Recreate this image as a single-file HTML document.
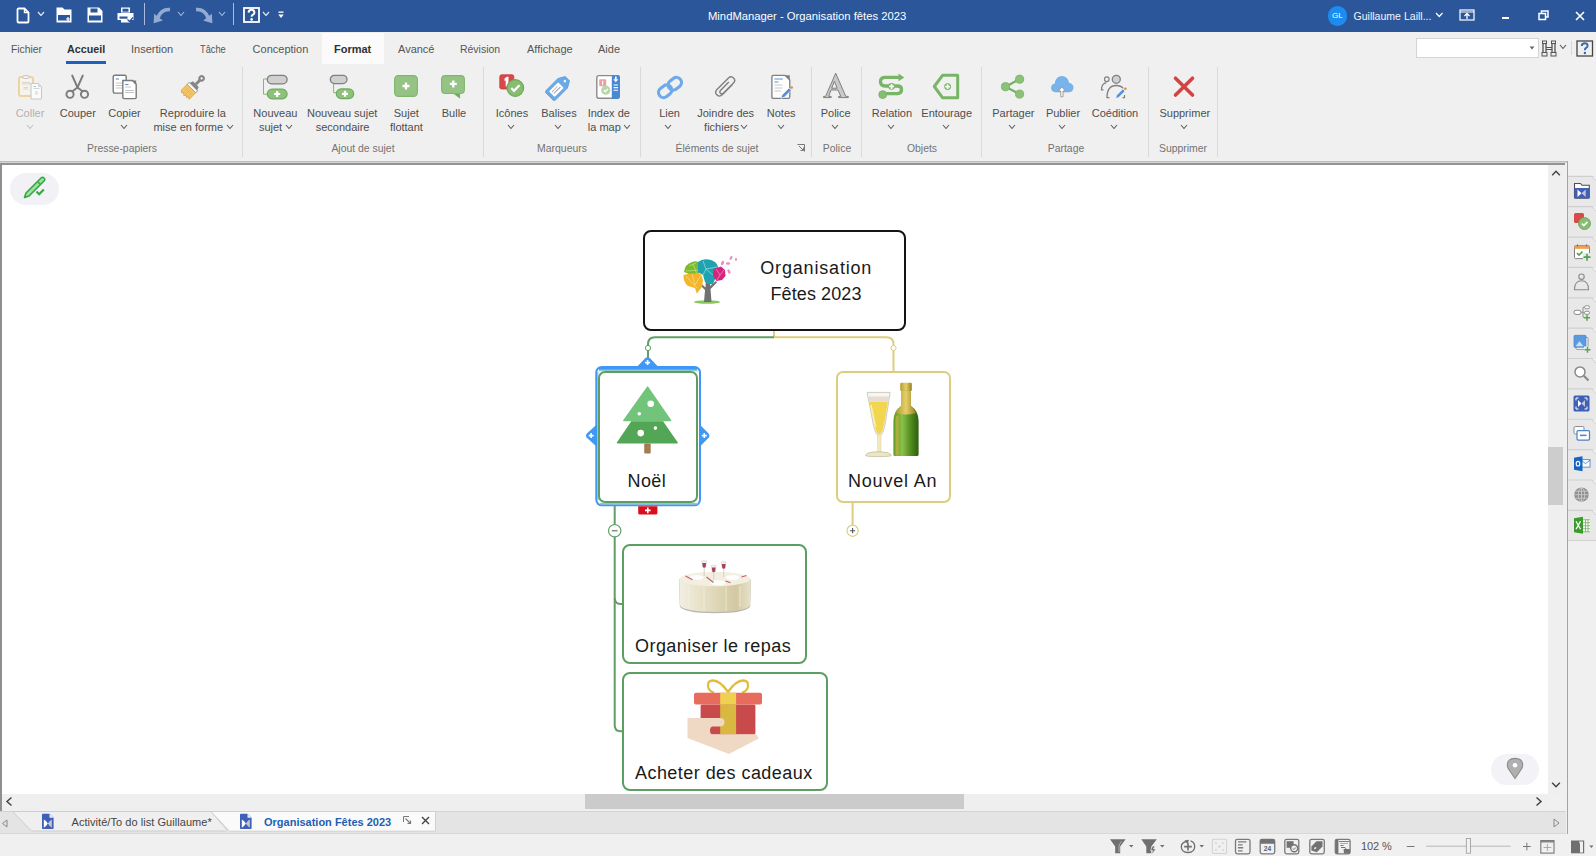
<!DOCTYPE html>
<html><head><meta charset="utf-8">
<style>
*{margin:0;padding:0;box-sizing:border-box}
html,body{width:1596px;height:856px;overflow:hidden;background:#f0f0f0;font-family:"Liberation Sans", sans-serif;position:relative}
.a,.t,.s{position:absolute}
.t{white-space:nowrap}
</style></head><body>

<div class="a" style="left:0px;top:0px;width:1596px;height:32px;background:#2b579a"></div>
<svg class="s" style="left:16px;top:7px;" width="14" height="17" viewBox="0 0 14 17"><path d="M2 1.5 H8.5 L12.5 5.5 V14.5 Q12.5 15.5 11.5 15.5 H2.5 Q1.5 15.5 1.5 14.5 V2.5 Q1.5 1.5 2.5 1.5 Z" fill="none" stroke="#fff" stroke-width="1.8"/><path d="M8.5 1.5 V5.5 H12.5" fill="none" stroke="#fff" stroke-width="1.4"/></svg>
<svg class="s" style="left:37.3px;top:10.85px;" width="8" height="5.5" viewBox="0 0 8 5.5"><polyline points="1,1 4.0,4.5 7,1" fill="none" stroke="#dfe6f2" stroke-width="1.2"/></svg>
<svg class="s" style="left:56px;top:7px;" width="17" height="16" viewBox="0 0 17 16"><path d="M0.5 0.5 H6.5 L8.5 2.5 H15.5 V15.5 H0.5 Z" fill="#fff"/><rect x="2" y="8" width="12" height="5.5" fill="#2b579a"/><path d="M10 12 h4 M12 10 v4" stroke="#fff" stroke-width="1.2"/></svg>
<svg class="s" style="left:87px;top:7px;" width="16" height="16" viewBox="0 0 16 16"><path d="M0.5 0.5 H12 L15.5 4 V15.5 H0.5 Z" fill="#fff"/><rect x="3.5" y="1.5" width="7" height="4" fill="#2b579a"/><rect x="2" y="8.5" width="12" height="5" fill="#2b579a"/></svg>
<svg class="s" style="left:117px;top:7px;" width="17" height="16" viewBox="0 0 17 16"><rect x="4" y="0.5" width="9" height="5" fill="#fff"/><rect x="5.5" y="1.7" width="6" height="3" fill="#2b579a"/><path d="M0.5 6 H16.5 V13 H13 V15.5 H4 V13 H0.5 Z" fill="#fff"/><rect x="2.5" y="9.5" width="8" height="2.2" fill="#2b579a"/><path d="M10.5 12.5 L12.5 14.5 L16 10.5" stroke="#2b579a" stroke-width="1.3" fill="none"/></svg>
<div class="a" style="left:143.5px;top:3px;width:1.2px;height:22px;background:#aabbdd"></div>
<svg class="s" style="left:153px;top:7px;" width="18" height="17" viewBox="0 0 18 17"><path d="M17 2.6 Q8.5 1.8 5 10.5" stroke="#93abd3" stroke-width="3.6" fill="none"/><path d="M0.6 16.2 L1.2 6.8 L9.8 13.4 Z" fill="#93abd3"/></svg>
<svg class="s" style="left:176.5px;top:11.25px;" width="8" height="5.5" viewBox="0 0 8 5.5"><polyline points="1,1 4.0,4.5 7,1" fill="none" stroke="#a9bcdc" stroke-width="1.1"/></svg>
<svg class="s" style="left:195px;top:7px;" width="18" height="17" viewBox="0 0 18 17"><path d="M1 2.6 Q9.5 1.8 13 10.5" stroke="#93abd3" stroke-width="3.6" fill="none"/><path d="M17.4 16.2 L16.8 6.8 L8.2 13.4 Z" fill="#93abd3"/></svg>
<svg class="s" style="left:218.0px;top:11.25px;" width="8" height="5.5" viewBox="0 0 8 5.5"><polyline points="1,1 4.0,4.5 7,1" fill="none" stroke="#a9bcdc" stroke-width="1.1"/></svg>
<div class="a" style="left:232.7px;top:3px;width:1.2px;height:22px;background:#aabbdd"></div>
<svg class="s" style="left:243px;top:7px;" width="17" height="16" viewBox="0 0 17 16"><rect x="1" y="1" width="15" height="14" fill="none" stroke="#fff" stroke-width="1.8"/><path d="M5.6 5.6 Q5.8 2.8 8.5 2.8 Q11.4 2.8 11.4 5.4 Q11.4 7 9.4 8 Q8.6 8.5 8.6 9.8" fill="none" stroke="#fff" stroke-width="2"/><circle cx="8.6" cy="12.4" r="1.3" fill="#fff"/></svg>
<svg class="s" style="left:262.0px;top:10.55px;" width="8" height="5.5" viewBox="0 0 8 5.5"><polyline points="1,1 4.0,4.5 7,1" fill="none" stroke="#dfe6f2" stroke-width="1.2"/></svg>
<svg class="s" style="left:278px;top:11px;" width="6" height="8" viewBox="0 0 6 8"><rect x="0.5" y="0.5" width="5" height="1.3" fill="#fff"/><path d="M0.3 3.5 H5.7 L3 7 Z" fill="#fff"/></svg>
<div class="t" style="left:708px;top:9.8px;font-size:11.25px;line-height:13px;color:#fff">MindManager - Organisation fêtes 2023</div>
<div class="a" style="left:1327.5px;top:6px;width:19.5px;height:19.5px;background:#1c8cf0;border-radius:50%"></div>
<div class="t" style="left:1327.5px;top:10px;width:19.5px;text-align:center;font-size:8px;line-height:12px;color:#fff">GL</div>
<div class="t" style="left:1353.5px;top:10px;font-size:10.55px;line-height:13px;color:#f2f5fa">Guillaume Laill...</div>
<svg class="s" style="left:1434.55px;top:12.25px;" width="8.5" height="5.5" viewBox="0 0 8.5 5.5"><polyline points="1,1 4.25,4.5 7.5,1" fill="none" stroke="#fff" stroke-width="1.2"/></svg>
<svg class="s" style="left:1459px;top:9px;" width="16" height="12" viewBox="0 0 16 12"><rect x="1" y="1" width="14" height="10" fill="none" stroke="#fff" stroke-width="1.2"/><path d="M1 3 H15" stroke="#fff" stroke-width="1"/><path d="M8 10 V5 M5.5 7 L8 4.5 L10.5 7" stroke="#fff" stroke-width="1.3" fill="none"/></svg>
<div class="a" style="left:1502.4px;top:16.5px;width:6.5px;height:2.5px;background:#fff"></div>
<svg class="s" style="left:1538px;top:10px;" width="11" height="11" viewBox="0 0 11 11"><rect x="1" y="3.5" width="6.5" height="6" fill="none" stroke="#fff" stroke-width="1.5"/><path d="M3.5 3.5 V1 H10 V7 H7.5" fill="none" stroke="#fff" stroke-width="1.5"/></svg>
<svg class="s" style="left:1575px;top:11px;" width="10" height="10" viewBox="0 0 10 10"><path d="M1 1 L9 9 M9 1 L1 9" stroke="#fff" stroke-width="1.6"/></svg>
<div class="a" style="left:322px;top:33px;width:62px;height:30.5px;background:#fbfbfb"></div>
<div class="t" style="left:11px;top:43.4px;font-size:11px;line-height:13px;color:#555;font-weight:400;transform:scaleX(0.94);transform-origin:0 0">Fichier</div>
<div class="t" style="left:67px;top:43.4px;font-size:11px;line-height:13px;color:#303030;font-weight:700;transform:scaleX(0.975);transform-origin:0 0">Accueil</div>
<div class="t" style="left:131px;top:43.4px;font-size:11px;line-height:13px;color:#555;font-weight:400;transform:scaleX(1);transform-origin:0 0">Insertion</div>
<div class="t" style="left:200px;top:43.4px;font-size:11px;line-height:13px;color:#555;font-weight:400;transform:scaleX(0.84);transform-origin:0 0">Tâche</div>
<div class="t" style="left:252.6px;top:43.4px;font-size:11px;line-height:13px;color:#555;font-weight:400;transform:scaleX(1);transform-origin:0 0">Conception</div>
<div class="t" style="left:334px;top:43.4px;font-size:11px;line-height:13px;color:#303030;font-weight:700;transform:scaleX(1);transform-origin:0 0">Format</div>
<div class="t" style="left:398px;top:43.4px;font-size:11px;line-height:13px;color:#555;font-weight:400;transform:scaleX(1);transform-origin:0 0">Avancé</div>
<div class="t" style="left:460px;top:43.4px;font-size:11px;line-height:13px;color:#555;font-weight:400;transform:scaleX(0.95);transform-origin:0 0">Révision</div>
<div class="t" style="left:527px;top:43.4px;font-size:11px;line-height:13px;color:#555;font-weight:400;transform:scaleX(1);transform-origin:0 0">Affichage</div>
<div class="t" style="left:598px;top:43.4px;font-size:11px;line-height:13px;color:#555;font-weight:400;transform:scaleX(1);transform-origin:0 0">Aide</div>
<div class="a" style="left:66px;top:60.5px;width:40px;height:3.2px;background:#1f5fc0"></div>
<div class="a" style="left:1416px;top:37.5px;width:122.5px;height:20px;background:#fff;border:1px solid #d4d4d4"></div>
<svg class="s" style="left:1529px;top:45.5px;" width="6" height="4" viewBox="0 0 6 4"><path d="M0.5 0.5 H5.5 L3 3.5 Z" fill="#666"/></svg>
<svg class="s" style="left:1541px;top:40px;" width="18" height="17" viewBox="0 0 18 17"><rect x="1.5" y="1" width="4" height="2.5" fill="none" stroke="#555" stroke-width="1"/><rect x="10.5" y="1" width="4" height="2.5" fill="none" stroke="#555" stroke-width="1"/><path d="M2 4 V13 M5 4 V13 M11 4 V13 M14 4 V13" stroke="#555" stroke-width="1.3"/><rect x="1" y="12.5" width="5" height="3.5" fill="none" stroke="#555" stroke-width="1"/><rect x="10" y="12.5" width="5" height="3.5" fill="none" stroke="#555" stroke-width="1"/><path d="M5 7.5 H11 M5 9.5 H11" stroke="#555" stroke-width="1"/></svg>
<svg class="s" style="left:1559.2px;top:44.05px;" width="8" height="5.5" viewBox="0 0 8 5.5"><polyline points="1,1 4.0,4.5 7,1" fill="none" stroke="#555" stroke-width="1.1"/></svg>
<div class="a" style="left:1571.3px;top:40.5px;width:1px;height:14px;background:#d8d8d8"></div>
<svg class="s" style="left:1576px;top:39.5px;" width="18" height="17" viewBox="0 0 18 17"><rect x="1" y="1" width="15.5" height="15" fill="none" stroke="#444" stroke-width="1.3"/><path d="M5.8 6 Q5.8 3.3 8.8 3.3 Q11.6 3.3 11.6 5.7 Q11.6 7.3 9.8 8.2 Q8.9 8.7 8.9 10.3" fill="none" stroke="#3c68b0" stroke-width="1.9"/><circle cx="8.9" cy="13" r="1.2" fill="#3c68b0"/></svg>
<div class="a" style="left:242.3px;top:67px;width:1px;height:90px;background:#dadada"></div>
<div class="a" style="left:482.5px;top:67px;width:1px;height:90px;background:#dadada"></div>
<div class="a" style="left:639.8px;top:67px;width:1px;height:90px;background:#dadada"></div>
<div class="a" style="left:810.5px;top:67px;width:1px;height:90px;background:#dadada"></div>
<div class="a" style="left:861px;top:67px;width:1px;height:90px;background:#dadada"></div>
<div class="a" style="left:981.4px;top:67px;width:1px;height:90px;background:#dadada"></div>
<div class="a" style="left:1148.4px;top:67px;width:1px;height:90px;background:#dadada"></div>
<div class="a" style="left:1216.5px;top:67px;width:1px;height:90px;background:#dadada"></div>
<!-- Coller -->
<svg class="s" style="left:17px;top:74px" width="26" height="26" viewBox="0 0 26 26">
<rect x="2" y="3" width="14" height="19" rx="2" fill="#f7f3ea" stroke="#ecd3a3" stroke-width="2"/>
<rect x="6" y="1.5" width="6" height="3" rx="1.2" fill="#f0f0f0" stroke="#c8c8c8" stroke-width="1"/>
<path d="M5 8.5 H13 M5 10 H13 M6.5 13.5 H11 M6.5 15 H11" stroke="#d2d2d2" stroke-width="0.9"/>
<path d="M14 9.5 H21 L24.5 13 V24 Q24.5 25 23.5 25 H15 Q14 25 14 24 Z" fill="#fbfbfb" stroke="#c8c8c8" stroke-width="1.1"/>
<path d="M21 9.5 V13 H24.5" fill="#d9d9d9"/>
<path d="M16.5 12.5 H19" stroke="#9ec0ea" stroke-width="1"/>
<path d="M16.5 14.5 H22.5 M18 18 H21 M18 19.8 H21" stroke="#cfcfcf" stroke-width="0.9"/>
</svg>
<!-- Couper -->
<svg class="s" style="left:64px;top:74px" width="27" height="26" viewBox="0 0 27 26">
<path d="M8.2 1.5 L13.5 13.5 M18.8 1.5 L13.5 13.5" stroke="#7c7c7c" stroke-width="1.9" stroke-linecap="round"/>
<path d="M13.5 13.5 L7.8 17.8 M13.5 13.5 L19.2 17.8" stroke="#7c7c7c" stroke-width="1.9"/>
<circle cx="6" cy="20.3" r="3.6" fill="none" stroke="#7c7c7c" stroke-width="1.9"/>
<circle cx="20.5" cy="20.3" r="3.6" fill="none" stroke="#7c7c7c" stroke-width="1.9"/>
</svg>
<!-- Copier -->
<svg class="s" style="left:112px;top:74px" width="26" height="26" viewBox="0 0 26 26">
<rect x="1.2" y="1.3" width="13" height="17.8" rx="1.5" fill="#fff" stroke="#7a7a7a" stroke-width="1.4"/>
<path d="M3.8 5 H7" stroke="#5a8fd8" stroke-width="1.1"/>
<path d="M3.8 9 H10 M3.8 11.5 H10 M3.8 14 H10" stroke="#bdbdbd" stroke-width="0.9"/>
<path d="M10.8 6.5 H20.5 L24.2 10.2 V23.5 Q24.2 24.6 23 24.6 H12 Q10.8 24.6 10.8 23.5 Z" fill="#fff" stroke="#7a7a7a" stroke-width="1.4"/>
<path d="M20 6.5 L24.2 10.7 V6.5 Z" fill="#7a7a7a"/>
<path d="M13.2 10.5 H16.5" stroke="#5a8fd8" stroke-width="1.1"/>
<path d="M13.2 13 H19 M13.2 16.5 H22 M13.2 18.5 H22" stroke="#bdbdbd" stroke-width="0.9"/>
</svg>
<!-- Brush -->
<svg class="s" style="left:179px;top:73px" width="28" height="28" viewBox="0 0 28 28">
<g transform="rotate(45 14 14)">
<circle cx="14" cy="1.8" r="3.2" fill="#858585"/><circle cx="14" cy="1.8" r="1.2" fill="#f0f0f0"/>
<rect x="12.6" y="4" width="2.8" height="6" fill="#858585"/>
<path d="M10 10 H18 L19 12.5 V13.5 H9 V12.5 Z" fill="#858585"/>
<rect x="8" y="13.5" width="12" height="2.8" fill="#fff" stroke="#8a8a8a" stroke-width="0.9"/>
<path d="M8 16.3 H20 V25.5 L18 24 L17 26 L15 24.5 L13.5 26.5 L11.5 24.5 L10 26 L8 24.5 Z" fill="#f2c466" stroke="#d9a84a" stroke-width="0.9"/>
<path d="M11 19 V22 M14 18.5 V23 M17 19 V22" stroke="#d9a84a" stroke-width="0.8"/>
</g>
</svg>
<!-- Nouveau sujet -->
<svg class="s" style="left:262px;top:74px" width="26" height="26" viewBox="0 0 26 26">
<path d="M5 5 H1.5 V20.2 H5" fill="none" stroke="#7fba6d" stroke-width="1"/>
<rect x="5.3" y="1.3" width="19.8" height="8.6" rx="4.3" fill="#d0d0d0" stroke="#7f7f7f" stroke-width="1.3"/>
<rect x="5.3" y="15.2" width="19.8" height="9.6" rx="4.8" fill="#8dc27b" stroke="#6eaa5c" stroke-width="1.2"/>
<path d="M15.2 17 V23 M12.2 20 H18.2" stroke="#fff" stroke-width="2.2"/>
</svg>
<!-- Nouveau sujet secondaire -->
<svg class="s" style="left:329px;top:74px" width="26" height="26" viewBox="0 0 26 26">
<path d="M4.6 9.5 V18.7 H7.5" fill="none" stroke="#7fba6d" stroke-width="1"/>
<rect x="1.3" y="1.3" width="16.7" height="8.3" rx="4.1" fill="#d0d0d0" stroke="#7f7f7f" stroke-width="1.3"/>
<rect x="7.3" y="14.9" width="17.4" height="9.7" rx="4.8" fill="#8dc27b" stroke="#6eaa5c" stroke-width="1.2"/>
<path d="M16 16.8 V22.8 M13 19.8 H19" stroke="#fff" stroke-width="2.2"/>
</svg>
<!-- Sujet flottant -->
<svg class="s" style="left:393px;top:74px" width="26" height="24" viewBox="0 0 26 24">
<rect x="1.6" y="1.6" width="22.8" height="20.8" rx="3.8" fill="#95c383" stroke="#80b56e" stroke-width="1.1"/>
<path d="M13 8.5 V15.5 M9.5 12 H16.5" stroke="#fff" stroke-width="2.3"/>
</svg>
<!-- Bulle -->
<svg class="s" style="left:440px;top:74px" width="26" height="25" viewBox="0 0 26 25">
<path d="M5.3 1.6 H20.7 Q24.4 1.6 24.4 5.3 V15.8 Q24.4 19.5 20.7 19.5 H19.5 L19.6 23.7 L14 19.5 H5.3 Q1.6 19.5 1.6 15.8 V5.3 Q1.6 1.6 5.3 1.6 Z" fill="#95c383" stroke="#80b56e" stroke-width="1.1"/>
<path d="M19 19.5 L19.5 23.5 L14.5 19.6 Z" fill="#6aa85a"/>
<path d="M13.3 6.4 V13.4 M9.8 9.9 H16.8" stroke="#fff" stroke-width="2.3"/>
</svg>
<!-- Icones -->
<svg class="s" style="left:498px;top:73px" width="28" height="27" viewBox="0 0 28 27">
<rect x="1.8" y="1.8" width="14" height="14.2" rx="1.8" fill="#d84a4a" stroke="#c53a3a" stroke-width="0.8"/>
<path d="M6.5 5.5 L9 3.8 H10.5 V13.5 H7.7 V7.5 L6.5 8 Z" fill="#fff"/>
<circle cx="17.3" cy="15" r="8.3" fill="#87bd70" stroke="#6aa858" stroke-width="1.2"/>
<path d="M13.2 15 L16 17.8 L21.5 12.3" fill="none" stroke="#fff" stroke-width="2.3"/>
</svg>
<!-- Balises -->
<svg class="s" style="left:545px;top:74px" width="27" height="27" viewBox="0 0 27 27">
<g transform="rotate(-45 13.5 13.5)">
<path d="M2.5 6.8 H19.5 L26 10.5 V16.5 L19.5 20.2 H2.5 Q0.8 20.2 0.8 18.5 V8.5 Q0.8 6.8 2.5 6.8 Z" fill="#6aaae8" stroke="#5a98dc" stroke-width="0.8"/>
<rect x="4" y="9.5" width="13" height="8" rx="1" fill="#fff"/>
<path d="M6 12 H8 M6 14.5 H15" stroke="#9a9a9a" stroke-width="1"/>
<path d="M8 12 H13.5" stroke="#c0c0c0" stroke-width="1"/>
<circle cx="22.5" cy="13.5" r="1.2" fill="#fff"/>
</g>
</svg>
<!-- Index -->
<svg class="s" style="left:595px;top:74px" width="26" height="26" viewBox="0 0 26 26">
<rect x="1.8" y="1.6" width="22.4" height="22.6" rx="2" fill="#fff" stroke="#8a8a8a" stroke-width="1.4"/>
<path d="M16.8 0.9 H22.5 Q24.9 0.9 24.9 3.3 V22.6 Q24.9 24.9 22.5 24.9 H16.8 Z" fill="#4a88d2"/>
<rect x="4.2" y="5.3" width="7" height="7" rx="1" fill="#eaa0a0"/>
<path d="M7 7 L8.2 6.4 V11 H7.2" fill="#fff"/>
<circle cx="10.8" cy="16.2" r="4.6" fill="#b6d8a8"/>
<path d="M8.8 16.2 L10.3 17.6 L13 14.9" fill="none" stroke="#fff" stroke-width="1.3"/>
<path d="M20.8 2.4 V5.5" stroke="#fff" stroke-width="1.6"/><path d="M18.3 5.2 H23.3 L20.8 8.3 Z" fill="#fff"/>
<path d="M18.6 11 H23 M18.6 13.6 H23 M18.6 16.2 H23" stroke="#fff" stroke-width="1.1"/>
</svg>
<!-- Lien -->
<svg class="s" style="left:654px;top:72px" width="32" height="31" viewBox="0 0 32 31">
<g transform="rotate(-38 16 15.5)" fill="none" stroke="#6eaae9" stroke-width="3.2">
<rect x="2.8" y="10.5" width="14.2" height="10" rx="5"/>
<rect x="15" y="10.5" width="14.2" height="10" rx="5"/>
</g>
</svg>
<!-- Paperclip -->
<svg class="s" style="left:713px;top:74px" width="25" height="26" viewBox="0 0 25 26">
<path d="M19.5 10.5 L9.5 20.5 Q6.5 23.5 3.8 20.8 Q1.2 18.2 4.2 15.2 L15.5 3.9 Q18 1.4 20.6 4 Q23 6.5 20.5 9 L10.5 19 Q8.8 20.7 7.4 19.3 Q6 17.9 7.7 16.2 L15.8 8.1" fill="none" stroke="#7f7f7f" stroke-width="1.4"/>
</svg>
<!-- Notes -->
<svg class="s" style="left:771px;top:74px" width="23" height="26" viewBox="0 0 23 26">
<path d="M2.4 1.3 H14 L18.8 6 V22.8 Q18.8 24.4 17.2 24.4 H2.4 Q0.9 24.4 0.9 22.8 V2.9 Q0.9 1.3 2.4 1.3 Z" fill="#fff" stroke="#7f7f7f" stroke-width="1.3"/>
<path d="M13.8 1.3 L18.8 6.3 V1.3 Z" fill="#7f7f7f"/>
<path d="M3.5 5 H11.8 M3.5 8 H7.5" stroke="#5a8fd8" stroke-width="1"/>
<path d="M3.5 11 H11.5 M3.5 14 H11.5 M3.5 17 H10" stroke="#c0c0c0" stroke-width="0.9"/>
<path d="M10 24.3 L11 21 L18 14 L20.3 16.3 L13.3 23.3 Z" fill="#5a8fd8" stroke="#fff" stroke-width="0.6"/>
<circle cx="20.7" cy="13.5" r="1.3" fill="#d89040"/>
</svg>
<!-- Police A -->
<svg class="s" style="left:822px;top:72px" width="28" height="27" viewBox="0 0 28 27">
<path d="M13.7 1.2 L23.8 24.4 H26.3 V25.6 H16.6 V24.4 H18.8 L16 18 H9 L6.6 24.4 H9.2 V25.6 H1.5 V24.4 H3.6 Z M9.7 16.2 H15.2 L12.3 9.3 Z" fill="#c9c9c9" stroke="#808080" stroke-width="1" fill-rule="evenodd"/>
</svg>
<!-- Relation -->
<svg class="s" style="left:876px;top:73px" width="30" height="27" viewBox="0 0 30 27">
<path d="M24 4.4 H9 Q4.5 4.4 4.5 8.6 Q4.5 13 9 13 H21.5 Q25.5 13 25.5 16.8 Q25.5 20.6 21.5 20.6 H7" fill="none" stroke="#78b566" stroke-width="3.3"/>
<path d="M22.5 0.6 L28.3 4.4 L22.5 8.2 Z" fill="#78b566"/>
<circle cx="6.7" cy="21.6" r="3.9" fill="#86bd72" stroke="#78b566" stroke-width="1"/>
<circle cx="15.6" cy="13.4" r="3.3" fill="#78b566"/>
<path d="M15.6 10.9 V15.9 M13.1 13.4 H18.1" stroke="#fff" stroke-width="1.6"/>
</svg>
<!-- Entourage -->
<svg class="s" style="left:932px;top:73px" width="28" height="27" viewBox="0 0 28 27">
<path d="M10.5 2.3 H25.7 V24.7 H10.5 L2.3 13.5 Z" fill="none" stroke="#78b566" stroke-width="3" stroke-linejoin="round"/>
<circle cx="15.6" cy="13.6" r="3.4" fill="#78b566"/>
<path d="M15.6 11.2 V16 M13.2 13.6 H18" stroke="#fff" stroke-width="1.6"/>
</svg>
<!-- Partager -->
<svg class="s" style="left:1000px;top:74px" width="25" height="26" viewBox="0 0 25 26">
<path d="M19.6 5.2 L5.5 12.7 L19.6 20.1" fill="none" stroke="#72b160" stroke-width="2.2"/>
<circle cx="19.6" cy="5.2" r="4.1" fill="#8cc178" stroke="#74b262" stroke-width="0.8"/>
<circle cx="5.5" cy="12.7" r="4.1" fill="#8cc178" stroke="#74b262" stroke-width="0.8"/>
<circle cx="19.6" cy="20.1" r="4.1" fill="#8cc178" stroke="#74b262" stroke-width="0.8"/>
</svg>
<!-- Publier -->
<svg class="s" style="left:1050px;top:75px" width="25" height="23" viewBox="0 0 25 23">
<path d="M5.5 16.8 Q1.5 16.8 1.5 12.8 Q1.5 9.2 5.3 8.8 Q5.8 1.6 12 1.6 Q17.8 1.6 18.6 8.3 Q23 8.6 23 12.6 Q23 16.8 18.8 16.8 Z" fill="#78b4ec" stroke="#6aa6e4" stroke-width="0.8"/>
<path d="M10.8 21.8 V16 H8.4 L11.9 11.8 L15.4 16 H13 V21.8 Z" fill="#fff" stroke="#8a8a8a" stroke-width="0.8"/>
</svg>
<!-- Coedition -->
<svg class="s" style="left:1100px;top:74px" width="29" height="26" viewBox="0 0 29 26">
<circle cx="6.8" cy="5.2" r="2.3" fill="none" stroke="#808080" stroke-width="1.2"/>
<path d="M3.5 15.8 H1.5 Q1.5 9.5 6.5 8.6" fill="none" stroke="#808080" stroke-width="1.2"/>
<circle cx="16.3" cy="5.3" r="4" fill="#cfcfcf" stroke="#808080" stroke-width="1.3"/>
<path d="M9.5 23.6 H7 Q7 11.5 16.3 11.5 Q21 11.5 23.2 14.3" fill="none" stroke="#808080" stroke-width="1.3"/>
<path d="M22.5 23.6 H24.5 V21" fill="none" stroke="#808080" stroke-width="1.2"/>
<path d="M15.6 24.5 L16.6 21.2 L22.8 15 L25 17.2 L18.8 23.4 Z" fill="#5a90d8" stroke="#fff" stroke-width="0.6"/>
<circle cx="25.4" cy="14.7" r="1.3" fill="#d89040"/>
</svg>
<!-- Supprimer -->
<svg class="s" style="left:1172px;top:75px" width="24" height="24" viewBox="0 0 24 24">
<path d="M3.5 3.2 L20.5 20 M20.5 3.2 L3.5 20" stroke="#d24444" stroke-width="3.6" stroke-linecap="round"/>
</svg>

<div class="t" style="left:-70px;width:200px;text-align:center;top:107.0px;font-size:11px;line-height:13px;color:#b2b2b2;font-weight:400;">Coller</div>
<svg class="s" style="left:25.5px;top:124.25px;" width="8" height="5.5" viewBox="0 0 8 5.5"><polyline points="1,1 4.0,4.5 7,1" fill="none" stroke="#c0c0c0" stroke-width="1.05"/></svg>
<div class="t" style="left:-22.200000000000003px;width:200px;text-align:center;top:107.0px;font-size:11px;line-height:13px;color:#4e4e4e;font-weight:400;">Couper</div>
<div class="t" style="left:24.5px;width:200px;text-align:center;top:107.0px;font-size:11px;line-height:13px;color:#4e4e4e;font-weight:400;">Copier</div>
<svg class="s" style="left:120.0px;top:124.15px;" width="8" height="5.5" viewBox="0 0 8 5.5"><polyline points="1,1 4.0,4.5 7,1" fill="none" stroke="#5a5a5a" stroke-width="1.05"/></svg>
<div class="t" style="left:92.9px;width:200px;text-align:center;top:107.0px;font-size:11px;line-height:13px;color:#4e4e4e;font-weight:400;">Reproduire la</div>
<div class="t" style="left:88.30000000000001px;width:200px;text-align:center;top:120.6px;font-size:11px;line-height:13px;color:#4e4e4e;font-weight:400;">mise en forme</div>
<svg class="s" style="left:225.7px;top:124.15px;" width="8" height="5.5" viewBox="0 0 8 5.5"><polyline points="1,1 4.0,4.5 7,1" fill="none" stroke="#5a5a5a" stroke-width="1.05"/></svg>
<div class="t" style="left:175.39999999999998px;width:200px;text-align:center;top:107.0px;font-size:11px;line-height:13px;color:#4e4e4e;font-weight:400;">Nouveau</div>
<div class="t" style="left:170.5px;width:200px;text-align:center;top:120.6px;font-size:11px;line-height:13px;color:#4e4e4e;font-weight:400;">sujet</div>
<svg class="s" style="left:285.0px;top:124.15px;" width="8" height="5.5" viewBox="0 0 8 5.5"><polyline points="1,1 4.0,4.5 7,1" fill="none" stroke="#5a5a5a" stroke-width="1.05"/></svg>
<div class="t" style="left:242.2px;width:200px;text-align:center;top:107.0px;font-size:11px;line-height:13px;color:#4e4e4e;font-weight:400;">Nouveau sujet</div>
<div class="t" style="left:242.60000000000002px;width:200px;text-align:center;top:120.6px;font-size:11px;line-height:13px;color:#4e4e4e;font-weight:400;">secondaire</div>
<div class="t" style="left:306.3px;width:200px;text-align:center;top:107.0px;font-size:11px;line-height:13px;color:#4e4e4e;font-weight:400;">Sujet</div>
<div class="t" style="left:306.4px;width:200px;text-align:center;top:120.6px;font-size:11px;line-height:13px;color:#4e4e4e;font-weight:400;">flottant</div>
<div class="t" style="left:354px;width:200px;text-align:center;top:107.0px;font-size:11px;line-height:13px;color:#4e4e4e;font-weight:400;">Bulle</div>
<div class="t" style="left:22px;width:200px;text-align:center;top:142.0px;font-size:10.7px;line-height:13px;color:#737373;font-weight:400;transform:scaleX(0.975)">Presse-papiers</div>
<div class="t" style="left:262.6px;width:200px;text-align:center;top:142.0px;font-size:10.7px;line-height:13px;color:#737373;font-weight:400;transform:scaleX(0.975)">Ajout de sujet</div>
<div class="t" style="left:412px;width:200px;text-align:center;top:107.0px;font-size:11px;line-height:13px;color:#4e4e4e;font-weight:400;">Icônes</div>
<svg class="s" style="left:507.0px;top:124.15px;" width="8" height="5.5" viewBox="0 0 8 5.5"><polyline points="1,1 4.0,4.5 7,1" fill="none" stroke="#5a5a5a" stroke-width="1.05"/></svg>
<div class="t" style="left:459px;width:200px;text-align:center;top:107.0px;font-size:11px;line-height:13px;color:#4e4e4e;font-weight:400;">Balises</div>
<svg class="s" style="left:554.0px;top:124.15px;" width="8" height="5.5" viewBox="0 0 8 5.5"><polyline points="1,1 4.0,4.5 7,1" fill="none" stroke="#5a5a5a" stroke-width="1.05"/></svg>
<div class="t" style="left:508.79999999999995px;width:200px;text-align:center;top:107.0px;font-size:11px;line-height:13px;color:#4e4e4e;font-weight:400;">Index de</div>
<div class="t" style="left:504.29999999999995px;width:200px;text-align:center;top:120.6px;font-size:11px;line-height:13px;color:#4e4e4e;font-weight:400;">la map</div>
<svg class="s" style="left:623.0px;top:124.15px;" width="8" height="5.5" viewBox="0 0 8 5.5"><polyline points="1,1 4.0,4.5 7,1" fill="none" stroke="#5a5a5a" stroke-width="1.05"/></svg>
<div class="t" style="left:461.79999999999995px;width:200px;text-align:center;top:142.0px;font-size:10.7px;line-height:13px;color:#737373;font-weight:400;transform:scaleX(0.975)">Marqueurs</div>
<div class="t" style="left:569.6px;width:200px;text-align:center;top:107.0px;font-size:11px;line-height:13px;color:#4e4e4e;font-weight:400;">Lien</div>
<svg class="s" style="left:664.3px;top:124.15px;" width="8" height="5.5" viewBox="0 0 8 5.5"><polyline points="1,1 4.0,4.5 7,1" fill="none" stroke="#5a5a5a" stroke-width="1.05"/></svg>
<div class="t" style="left:625.7px;width:200px;text-align:center;top:107.0px;font-size:11px;line-height:13px;color:#4e4e4e;font-weight:400;">Joindre des</div>
<div class="t" style="left:621.5px;width:200px;text-align:center;top:120.6px;font-size:11px;line-height:13px;color:#4e4e4e;font-weight:400;">fichiers</div>
<svg class="s" style="left:740.3px;top:124.15px;" width="8" height="5.5" viewBox="0 0 8 5.5"><polyline points="1,1 4.0,4.5 7,1" fill="none" stroke="#5a5a5a" stroke-width="1.05"/></svg>
<div class="t" style="left:681.2px;width:200px;text-align:center;top:107.0px;font-size:11px;line-height:13px;color:#4e4e4e;font-weight:400;">Notes</div>
<svg class="s" style="left:776.6px;top:124.15px;" width="8" height="5.5" viewBox="0 0 8 5.5"><polyline points="1,1 4.0,4.5 7,1" fill="none" stroke="#5a5a5a" stroke-width="1.05"/></svg>
<div class="t" style="left:735.7px;width:200px;text-align:center;top:107.0px;font-size:11px;line-height:13px;color:#4e4e4e;font-weight:400;">Police</div>
<svg class="s" style="left:830.5px;top:124.15px;" width="8" height="5.5" viewBox="0 0 8 5.5"><polyline points="1,1 4.0,4.5 7,1" fill="none" stroke="#5a5a5a" stroke-width="1.05"/></svg>
<div class="t" style="left:617px;width:200px;text-align:center;top:142.0px;font-size:10.7px;line-height:13px;color:#737373;font-weight:400;transform:scaleX(0.975)">Éléments de sujet</div>
<div class="t" style="left:736.5px;width:200px;text-align:center;top:142.0px;font-size:10.7px;line-height:13px;color:#737373;font-weight:400;transform:scaleX(0.975)">Police</div>
<div class="t" style="left:791.9px;width:200px;text-align:center;top:107.0px;font-size:11px;line-height:13px;color:#4e4e4e;font-weight:400;">Relation</div>
<svg class="s" style="left:886.8px;top:124.15px;" width="8" height="5.5" viewBox="0 0 8 5.5"><polyline points="1,1 4.0,4.5 7,1" fill="none" stroke="#5a5a5a" stroke-width="1.05"/></svg>
<div class="t" style="left:846.7px;width:200px;text-align:center;top:107.0px;font-size:11px;line-height:13px;color:#4e4e4e;font-weight:400;">Entourage</div>
<svg class="s" style="left:941.8px;top:124.15px;" width="8" height="5.5" viewBox="0 0 8 5.5"><polyline points="1,1 4.0,4.5 7,1" fill="none" stroke="#5a5a5a" stroke-width="1.05"/></svg>
<div class="t" style="left:821.9px;width:200px;text-align:center;top:142.0px;font-size:10.7px;line-height:13px;color:#737373;font-weight:400;transform:scaleX(0.975)">Objets</div>
<div class="t" style="left:913.4px;width:200px;text-align:center;top:107.0px;font-size:11px;line-height:13px;color:#4e4e4e;font-weight:400;">Partager</div>
<svg class="s" style="left:1008.0px;top:124.15px;" width="8" height="5.5" viewBox="0 0 8 5.5"><polyline points="1,1 4.0,4.5 7,1" fill="none" stroke="#5a5a5a" stroke-width="1.05"/></svg>
<div class="t" style="left:963px;width:200px;text-align:center;top:107.0px;font-size:11px;line-height:13px;color:#4e4e4e;font-weight:400;">Publier</div>
<svg class="s" style="left:1057.8px;top:124.15px;" width="8" height="5.5" viewBox="0 0 8 5.5"><polyline points="1,1 4.0,4.5 7,1" fill="none" stroke="#5a5a5a" stroke-width="1.05"/></svg>
<div class="t" style="left:1015px;width:200px;text-align:center;top:107.0px;font-size:11px;line-height:13px;color:#4e4e4e;font-weight:400;">Coédition</div>
<svg class="s" style="left:1110.0px;top:124.15px;" width="8" height="5.5" viewBox="0 0 8 5.5"><polyline points="1,1 4.0,4.5 7,1" fill="none" stroke="#5a5a5a" stroke-width="1.05"/></svg>
<div class="t" style="left:1084.8px;width:200px;text-align:center;top:107.0px;font-size:11px;line-height:13px;color:#4e4e4e;font-weight:400;">Supprimer</div>
<svg class="s" style="left:1179.5px;top:124.15px;" width="8" height="5.5" viewBox="0 0 8 5.5"><polyline points="1,1 4.0,4.5 7,1" fill="none" stroke="#5a5a5a" stroke-width="1.05"/></svg>
<div class="t" style="left:965.7px;width:200px;text-align:center;top:142.0px;font-size:10.7px;line-height:13px;color:#737373;font-weight:400;transform:scaleX(0.975)">Partage</div>
<div class="t" style="left:1083.1px;width:200px;text-align:center;top:142.0px;font-size:10.7px;line-height:13px;color:#737373;font-weight:400;transform:scaleX(0.975)">Supprimer</div>
<svg class="s" style="left:797px;top:144px;" width="8" height="8" viewBox="0 0 8 8"><path d="M0.5 0.5 H7.5 V7.5" fill="none" stroke="#777" stroke-width="1"/><path d="M2 2 L6.5 6.5 M3.5 6.5 H6.5 V3.5" fill="none" stroke="#777" stroke-width="1"/></svg>
<!-- canvas frame -->
<div class="a" style="left:0;top:161px;width:1567px;height:1px;background:#bdbdbd"></div>
<div class="a" style="left:0;top:162px;width:1567px;height:1px;background:#d3d3d3"></div>
<div class="a" style="left:0;top:163px;width:1565px;height:2px;background:#939393"></div>
<div class="a" style="left:0;top:163px;width:2px;height:648px;background:#8f8f8f"></div>
<div class="a" style="left:2px;top:165px;width:1546px;height:629px;background:#fff"></div>
<!-- vertical scrollbar -->
<div class="a" style="left:1548px;top:165px;width:17px;height:629px;background:#efefef"></div>
<div class="a" style="left:1548px;top:447px;width:15px;height:58px;background:#cdcdcd"></div>
<svg class="s" style="left:1551px;top:169px" width="10" height="8" viewBox="0 0 10 8"><polyline points="1.2,6.3 5,2.3 8.8,6.3" fill="none" stroke="#444" stroke-width="1.5"/></svg>
<svg class="s" style="left:1551px;top:781px" width="10" height="8" viewBox="0 0 10 8"><polyline points="1.2,1.7 5,5.7 8.8,1.7" fill="none" stroke="#444" stroke-width="1.5"/></svg>
<div class="a" style="left:1566.5px;top:161px;width:1.6px;height:673px;background:#a3a3a3"></div>
<!-- horizontal scrollbar -->
<div class="a" style="left:2px;top:794px;width:1546px;height:17px;background:#efefef"></div>
<div class="a" style="left:585px;top:794px;width:379px;height:15px;background:#cbcbcb"></div>
<svg class="s" style="left:4px;top:796px" width="10" height="11" viewBox="0 0 10 11"><polyline points="7.5,1.5 3,5.5 7.5,9.5" fill="none" stroke="#444" stroke-width="1.5"/></svg>
<svg class="s" style="left:1534px;top:796px" width="10" height="11" viewBox="0 0 10 11"><polyline points="2.5,1.5 7,5.5 2.5,9.5" fill="none" stroke="#444" stroke-width="1.5"/></svg>
<!-- tabs bar -->
<div class="a" style="left:0;top:811px;width:1566px;height:1px;background:#d2d2d2"></div>
<div class="a" style="left:0;top:812px;width:1566px;height:21px;background:#e4e4e4"></div>
<div class="a" style="left:0;top:833px;width:1566px;height:1px;background:#d8d8d8"></div>
<svg class="s" style="left:0;top:811px" width="440" height="23" viewBox="0 0 440 23">
<path d="M12.5 0.5 H211 L226.5 18.5 Q227.3 20 225.5 20 H31.5 Z" fill="#efefef" stroke="#cdcdcd" stroke-width="1"/>
<path d="M211 0.5 H435.5 V20.2 H229.5 Z" fill="#fafafa" stroke="#d0d0d0" stroke-width="1"/>
<path d="M2.5 12.5 L7 9 V16 Z" fill="none" stroke="#8a8a8a" stroke-width="1"/>
</svg>
<svg class="s" style="left:41px;top:813px" width="14" height="17" viewBox="0 0 14 17">
<path d="M1 1.5 Q1 0.8 1.8 0.8 H8.5 L12.6 4.8 V15.2 Q12.6 16 11.8 16 H1.8 Q1 16 1 15.2 Z" fill="#3f5fb8"/>
<path d="M8.5 0.8 L12.6 4.8 H8.5 Z" fill="#e8ecf8"/>
<path d="M2.8 6.5 Q5 7.5 6.9 10.6 Q5 13.7 2.8 14.8 Z" fill="#fff"/><path d="M10.8 6.5 Q8.8 7.5 6.9 10.6 Q8.8 13.7 10.8 14.8 Z" fill="#c8c8c8"/>
</svg>
<div class="t" style="left:71.5px;top:816px;font-size:11px;line-height:13px;color:#444;letter-spacing:0.05px">Activité/To do list Guillaume*</div>
<svg class="s" style="left:239px;top:813px" width="14" height="17" viewBox="0 0 14 17">
<path d="M1 1.5 Q1 0.8 1.8 0.8 H8.5 L12.6 4.8 V15.2 Q12.6 16 11.8 16 H1.8 Q1 16 1 15.2 Z" fill="#3f5fb8"/>
<path d="M8.5 0.8 L12.6 4.8 H8.5 Z" fill="#e8ecf8"/>
<path d="M2.8 6.5 Q5 7.5 6.9 10.6 Q5 13.7 2.8 14.8 Z" fill="#fff"/><path d="M10.8 6.5 Q8.8 7.5 6.9 10.6 Q8.8 13.7 10.8 14.8 Z" fill="#c8c8c8"/>
</svg>
<div class="t" style="left:264px;top:816px;font-size:11px;line-height:13px;color:#1e5fb4;font-weight:700">Organisation Fêtes 2023</div>
<svg class="s" style="left:403px;top:816px" width="9" height="9" viewBox="0 0 9 9"><path d="M0.5 0.5 H6 M0.5 0.5 V6" fill="none" stroke="#777" stroke-width="1"/><path d="M2.5 2.5 L7.5 7.5 M4.5 7.5 H7.5 V4.5" fill="none" stroke="#777" stroke-width="1.1"/></svg>
<svg class="s" style="left:421px;top:816px" width="9" height="9" viewBox="0 0 9 9"><path d="M1 1 L8 8 M8 1 L1 8" stroke="#444" stroke-width="1.4"/></svg>
<svg class="s" style="left:1553px;top:818px" width="7" height="10" viewBox="0 0 7 10"><path d="M1 1 L6 5 L1 9 Z" fill="none" stroke="#8a8a8a" stroke-width="1"/></svg>
<!-- right side panel -->
<div class="a" style="left:1568px;top:176px;width:28px;height:365px;background:#e8e8e8"></div>
<svg class="s" style="left:1568px;top:175px" width="28" height="366" viewBox="1568 175 28 366">
<g stroke="#cfcfcf" stroke-width="1.2" fill="none">
<path d="M1568 176.30 H1592 L1596 180.50"/>
<path d="M1568 206.67 H1592 L1596 210.87"/>
<path d="M1568 237.04 H1592 L1596 241.24"/>
<path d="M1568 267.41 H1592 L1596 271.61"/>
<path d="M1568 297.78 H1592 L1596 301.98"/>
<path d="M1568 328.15 H1592 L1596 332.35"/>
<path d="M1568 358.52 H1592 L1596 362.72"/>
<path d="M1568 388.89 H1592 L1596 393.09"/>
<path d="M1568 419.26 H1592 L1596 423.46"/>
<path d="M1568 449.63 H1592 L1596 453.83"/>
<path d="M1568 480.00 H1592 L1596 484.20"/>
<path d="M1568 510.37 H1592 L1596 514.57"/>
<path d="M1568 540.74 H1596"/>
</g>
<g fill="#f0f0f0"><path d="M1592.6 176.90 L1596 180.30 V176.90 Z"/><path d="M1592.6 207.27 L1596 210.67 V207.27 Z"/><path d="M1592.6 237.64 L1596 241.04 V237.64 Z"/><path d="M1592.6 268.01 L1596 271.41 V268.01 Z"/><path d="M1592.6 298.38 L1596 301.78 V298.38 Z"/><path d="M1592.6 328.75 L1596 332.15 V328.75 Z"/><path d="M1592.6 359.12 L1596 362.52 V359.12 Z"/><path d="M1592.6 389.49 L1596 392.89 V389.49 Z"/><path d="M1592.6 419.86 L1596 423.26 V419.86 Z"/><path d="M1592.6 450.23 L1596 453.63 V450.23 Z"/><path d="M1592.6 480.60 L1596 484.00 V480.60 Z"/><path d="M1592.6 510.97 L1596 514.37 V510.97 Z"/></g>
<!-- 1 folder --><g transform="translate(0 0.00)">
<path d="M1574.5 183.5 H1580.5 L1582 185.3 H1589.3 V197.5 Q1589.3 198.3 1588.5 198.3 H1575.3 Q1574.5 198.3 1574.5 197.5 Z" fill="#fff" stroke="#505050" stroke-width="1.1"/>
<path d="M1574.5 187.9 H1589.3 V197.5 Q1589.3 198.3 1588.5 198.3 H1575.3 Q1574.5 198.3 1574.5 197.5 Z" fill="#3f5fb8"/>
<path d="M1577.5 189.5 L1581.6 193.2 L1577.5 196.9 Z" fill="#fff"/><path d="M1585.7 189.5 L1581.6 193.2 L1585.7 196.9 Z" fill="#c8c8c8"/>
</g>
<!-- 2 icons --><g transform="translate(0 0.07)">
<rect x="1574" y="213" width="10" height="10" rx="1.5" fill="#d84a4a"/>
<circle cx="1584.5" cy="223.5" r="6" fill="#87bd70" stroke="#6aa858" stroke-width="0.9"/>
<path d="M1581.8 223.5 L1583.8 225.5 L1587.4 221.8" fill="none" stroke="#fff" stroke-width="1.7"/>
</g>
<!-- 3 calendar --><g transform="translate(0 0.14)">
<rect x="1574.5" y="245.5" width="15" height="13" rx="1" fill="#fff" stroke="#808080" stroke-width="1"/>
<rect x="1574.5" y="245.5" width="15" height="3.2" fill="#f0a050"/>
<path d="M1577.5 244 V246.5 M1586.5 244 V246.5" stroke="#808080" stroke-width="1.1"/>
<path d="M1577 253 L1579 255 L1582.5 251.5" fill="none" stroke="#50a050" stroke-width="1.5"/>
<rect x="1583" y="253" width="8" height="8" fill="#e8e8e8"/>
<path d="M1587 253.5 V260.5 M1583.5 257 H1590.5" stroke="#50a050" stroke-width="1.6"/>
</g>
<!-- 4 person --><g transform="translate(0 0.21)">
<circle cx="1581.5" cy="276.5" r="2.7" fill="none" stroke="#8a8a8a" stroke-width="1.1"/>
<path d="M1574.5 289.5 Q1574.5 280.5 1581.5 280.5 Q1588.5 280.5 1588.5 289.5 Z" fill="none" stroke="#8a8a8a" stroke-width="1.1"/>
</g>
<!-- 5 nodes --><g transform="translate(0 0.28)">
<rect x="1574" y="310" width="7" height="4.2" rx="2" fill="#fff" stroke="#8a8a8a" stroke-width="1"/>
<rect x="1584.5" y="305.5" width="5" height="3" rx="1.5" fill="#fff" stroke="#8a8a8a" stroke-width="0.9"/>
<rect x="1584.5" y="311" width="5" height="3" rx="1.5" fill="#fff" stroke="#8a8a8a" stroke-width="0.9"/>
<path d="M1581 312 H1583 V307 H1584.5 M1583 312.5 H1584.5 M1583 312 V317 H1584" fill="none" stroke="#8a8a8a" stroke-width="0.9"/>
<path d="M1587 314.5 V320.5 M1584 317.5 H1590" stroke="#50a850" stroke-width="1.5"/>
</g>
<!-- 6 image --><g transform="translate(0 0.35)">
<rect x="1576" y="337" width="12" height="12" rx="1" fill="#fff" stroke="#8a8a8a" stroke-width="0.9"/>
<rect x="1574" y="335" width="12" height="12" rx="1" fill="#5a9ae0" stroke="#4a80c0" stroke-width="0.7"/>
<path d="M1575.5 346 L1579.5 341 L1583.5 346 Z" fill="#cfe0f4"/>
<rect x="1584" y="346" width="7" height="7" fill="#e8e8e8"/>
<path d="M1587.5 346.5 V352.5 M1584.5 349.5 H1590.5" stroke="#50a850" stroke-width="1.5"/>
</g>
<!-- 7 magnifier --><g transform="translate(0 0.42)">
<circle cx="1580" cy="371.5" r="5" fill="#fff" stroke="#8a8a8a" stroke-width="1.5"/>
<path d="M1583.8 375.3 L1588.5 380" stroke="#8a8a8a" stroke-width="2.2"/>
</g>
<!-- 8 focus --><g transform="translate(0 0.49)">
<rect x="1573.5" y="395" width="16" height="16" rx="1.5" fill="#3f5fb8"/>
<path d="M1576 400 V397.5 H1578.5 M1584.5 397.5 H1587 V400 M1587 406 V408.5 H1584.5 M1578.5 408.5 H1576 V406" fill="none" stroke="#fff" stroke-width="1"/>
<path d="M1578 399.5 L1581.5 403 L1578 406.5 Z" fill="#fff"/><path d="M1585 399.5 L1581.5 403 L1585 406.5 Z" fill="#c8c8c8"/>
</g>
<!-- 9 windows --><g transform="translate(0 0.56)">
<rect x="1574" y="426" width="10" height="7.5" rx="1.3" fill="#fff" stroke="#8a8a8a" stroke-width="1"/>
<rect x="1577" y="430" width="12.5" height="9.5" rx="1.3" fill="#fff" stroke="#4a80c8" stroke-width="1.2"/>
<path d="M1580 434.8 H1586.5" stroke="#4a80c8" stroke-width="1.5"/>
</g>
<!-- 10 outlook --><g transform="translate(0 0.63)">
<rect x="1581" y="459" width="9" height="7.5" fill="#fff" stroke="#4a88d0" stroke-width="0.9"/>
<path d="M1581 459.5 L1585.5 463 L1590 459.5" fill="none" stroke="#4a88d0" stroke-width="0.9"/>
<path d="M1574 457 L1582.5 455.5 V470.5 L1574 469 Z" fill="#1565c0"/>
<ellipse cx="1578" cy="463" rx="1.8" ry="2.3" fill="none" stroke="#fff" stroke-width="1.1"/>
</g>
<!-- 11 globe --><g transform="translate(0 0.70)">
<circle cx="1581.5" cy="494" r="7.2" fill="#909090"/>
<g stroke="#d8d8d8" stroke-width="0.7" fill="none"><ellipse cx="1581.5" cy="494" rx="3.2" ry="7"/><path d="M1581.5 487 V501 M1574.5 494 H1588.5 M1575.5 490.5 H1587.5 M1575.5 497.5 H1587.5"/></g>
</g>
<!-- 12 excel --><g transform="translate(0 0.77)">
<rect x="1582" y="518" width="8" height="13" fill="#fff"/>
<g stroke="#6ab04c" stroke-width="0.8"><path d="M1582.5 519 H1590 M1582.5 522 H1590 M1582.5 525 H1590 M1582.5 528 H1590 M1582.5 531 H1590 M1585.5 518.5 V531 M1588 518.5 V531"/></g>
<path d="M1574 517.5 L1583 516 V533 L1574 531.5 Z" fill="#3c9a2c"/>
<path d="M1576 520.5 L1580.5 528.5 M1580.5 520.5 L1576 528.5" stroke="#fff" stroke-width="1.3"/>
</g></svg>

<!-- status bar -->
<svg class="s" style="left:1100px;top:834px" width="496" height="22" viewBox="1100 834 496 22">
<g fill="#6f6f6f">
<!-- funnel1 -->
<path d="M1110 839.2 H1125.6 L1120.2 846.5 V853.3 H1115.2 V846.5 Z"/>
<path d="M1121.5 841 L1119 845.5 V852" stroke="#d8d8d8" stroke-width="0.6" fill="none"/>
<path d="M1129 845 H1133.5 L1131.25 847.5 Z"/>
<!-- funnel2 -->
<path d="M1141.3 839.2 H1156.8 L1151.3 846.5 V853.3 H1146.3 V846.5 Z"/>
<path d="M1152.5 846 L1155 846 L1153.5 849 L1156 849 L1151.5 854.5 L1152.5 850.5 L1150.5 850.5 Z" fill="#6f6f6f" stroke="#f0f0f0" stroke-width="0.6"/>
<path d="M1160 845 H1164.5 L1162.25 847.5 Z"/>
<!-- circle plus -->
<path d="M1184.5 840.5 L1189 839.8 L1187.5 844 Z"/>
<path d="M1186 841.5 Q1181.3 842.8 1181.3 846.6 Q1181.3 852.5 1188 852.5 Q1194.7 852.5 1194.7 846.6 Q1194.7 842 1190.5 840.8" fill="none" stroke="#6f6f6f" stroke-width="1.3"/>
<path d="M1188 842.8 V850.4 M1184.2 846.6 H1191.8" stroke="#6f6f6f" stroke-width="1.6"/>
<path d="M1199.5 845 H1204 L1201.75 847.5 Z"/>
</g>
<!-- disabled box -->
<rect x="1212.3" y="839.2" width="14.3" height="14.3" rx="1.5" fill="none" stroke="#d2d2d2" stroke-width="1.1"/>
<g fill="#d2d2d2"><circle cx="1216" cy="843" r="0.9"/><circle cx="1223" cy="843" r="0.9"/><circle cx="1216" cy="850" r="0.9"/><circle cx="1223" cy="850" r="0.9"/><circle cx="1219.5" cy="846.5" r="1.3"/></g>
<g fill="none" stroke="#7a7a7a" stroke-width="1.3">
<rect x="1235.5" y="839.3" width="14.5" height="14.5" rx="1.8"/>
<rect x="1260.2" y="839.3" width="14.5" height="14.5" rx="1.8"/>
<rect x="1284.8" y="839.3" width="14" height="14.5" rx="1.8"/>
<rect x="1309.8" y="839.3" width="14.5" height="14.5" rx="1.8"/>
<rect x="1335.3" y="839.3" width="14.8" height="14.5" rx="1.8"/>
</g>
<g fill="#727272">
<path d="M1238 841.9 H1246.4 M1238 844.9 H1242.6 M1238 847.8 H1243.2 M1238 850.9 H1242.6" stroke="#7a7a7a" stroke-width="1.4"/>
<path d="M1260.2 841 Q1260.2 839.3 1262 839.3 H1273 Q1274.7 839.3 1274.7 841 V843.8 H1260.2 Z"/>
<text x="1267.4" y="851.3" font-size="6.6" font-weight="700" text-anchor="middle" font-family="Liberation Sans" fill="#606060">24</text>
<path d="M1286.6 841.2 H1293.6 V847.8 H1286.6 Z"/>
<circle cx="1294.2" cy="848.3" r="3.5" fill="#f0f0f0" stroke="#727272" stroke-width="1.4"/>
<path d="M1292.6 848.3 L1294 849.6 L1296 847.3" stroke="#727272" stroke-width="0.9" fill="none"/>
<path d="M1311.4 850.5 L1311.4 846.5 L1316.5 841.2 H1322.5 V846.5 L1316.8 852.3 Z"/>
<ellipse cx="1315.2" cy="848.2" rx="1.3" ry="0.8" transform="rotate(-40 1315.2 848.2)" fill="#f0f0f0"/>
<rect x="1335.6" y="839.6" width="2.8" height="14" />
<path d="M1339 841.5 H1349.5" stroke="#727272" stroke-width="0.9"/>
<path d="M1340 843.5 H1348" stroke="#aaa" stroke-width="1"/>
<path d="M1340.5 845.5 H1343.5 M1341 847.5 H1345 L1347 850.5" stroke="#727272" stroke-width="1" fill="none"/>
<path d="M1343.5 849 H1350 V853.5 H1344 Z"/>
</g>
<text x="1361" y="849.8" font-size="11" fill="#555" font-family="Liberation Sans" letter-spacing="-0.1">102 %</text>
<path d="M1406.8 846.5 H1414.5" stroke="#777" stroke-width="1"/>
<path d="M1426 846.2 H1510.7" stroke="#b8b8b8" stroke-width="1"/>
<rect x="1466.3" y="838.5" width="4.3" height="14.7" fill="#f2f2f2" stroke="#999" stroke-width="0.8"/>
<path d="M1523 846.5 H1530.7 M1526.85 842.7 V850.3" stroke="#777" stroke-width="1"/>
<rect x="1540.8" y="840.6" width="13.2" height="12.5" fill="none" stroke="#777" stroke-width="1.1"/>
<path d="M1540.8 841.8 H1554" stroke="#777" stroke-width="1.3"/>
<path d="M1547.4 844 V851 M1543.5 847.5 H1551.3" stroke="#999" stroke-width="0.8"/>
<path d="M1571 840.5 H1584.2 V853.3 H1571 Z" fill="#6f6f6f"/>
<path d="M1579 841.5 H1583 V852.5 H1580 V844 Z" fill="#f0f0f0"/>
<path d="M1589.3 845.5 H1593.5 L1591.4 848 Z" fill="#6f6f6f"/>
</svg>

<!-- pencil pill -->
<div class="a" style="left:10px;top:173px;width:49px;height:32px;border-radius:16px;background:#f2f2f6"></div>
<svg class="s" style="left:20px;top:175px" width="30" height="27" viewBox="0 0 30 27">
<path d="M4.5 22.5 L6 18 L21 3 Q22.5 1.5 24 3 Q25.5 4.5 24 6 L9 21 Z" fill="#9ee0a0" stroke="#35a845" stroke-width="1.6" stroke-linejoin="round"/>
<path d="M17.5 6.5 L20.5 9.5" stroke="#35a845" stroke-width="1.4"/>
<path d="M16.5 16.5 L19.2 19.2 L23.8 14.5" fill="none" stroke="#35a845" stroke-width="2.2"/>
</svg>
<!-- location pill -->
<div class="a" style="left:1490.5px;top:753.5px;width:48.5px;height:31.5px;border-radius:16px;background:#f3f3f7"></div>
<svg class="s" style="left:1506px;top:757px" width="18" height="23" viewBox="0 0 18 23">
<path d="M9 21.5 L3.2 13 Q1.3 10.5 1.3 8.3 Q1.3 1.4 9 1.4 Q16.7 1.4 16.7 8.3 Q16.7 10.5 14.8 13 Z" fill="#b0b0b0" stroke="#8c8c8c" stroke-width="1.1"/>
<circle cx="9" cy="8.3" r="2.3" fill="#fff"/>
</svg>
<!-- connectors -->
<svg class="s" style="left:580px;top:325px" width="400" height="480" viewBox="580 325 400 480">
<path d="M774 331 V337.3" stroke="#dccd80" stroke-width="2" fill="none"/>
<path d="M774 337.3 H655 Q648 337.3 648 344.3 V358" stroke="#5f9f64" stroke-width="2" fill="none"/>
<path d="M774 337.3 H886.5 Q893.5 337.3 893.5 344.3 V372" stroke="#dccd80" stroke-width="2" fill="none"/>
<circle cx="648" cy="348" r="2.6" fill="#fff" stroke="#5f9f64" stroke-width="1"/>
<circle cx="893.5" cy="348" r="2.6" fill="#fff" stroke="#dccd80" stroke-width="1"/>
<path d="M614.7 506 V598 Q614.7 604 620.7 604 H624" stroke="#5f9f64" stroke-width="2" fill="none"/>
<path d="M614.7 598 V725.2 Q614.7 731.2 620.7 731.2 H624" stroke="#5f9f64" stroke-width="2" fill="none"/>
<circle cx="614.7" cy="530.7" r="6.2" fill="#fff" stroke="#5f9f64" stroke-width="1.2"/>
<path d="M611.8 530.7 H617.6" stroke="#888" stroke-width="1.5"/>
<path d="M852.6 503 V525" stroke="#dccd80" stroke-width="2" fill="none"/>
<circle cx="852.6" cy="530.7" r="5.6" fill="#fff" stroke="#dccd80" stroke-width="1.2"/>
<path d="M850 530.7 H855.2 M852.6 528.1 V533.3" stroke="#555" stroke-width="1.1"/>
</svg>
<!-- root -->
<div class="a" style="left:642.8px;top:229.8px;width:263.2px;height:101.6px;border:2.6px solid #141414;border-radius:8px;background:#fff"></div>
<div class="t" style="left:760.3px;top:257px;font-size:18px;line-height:22px;color:#1a1a1a;letter-spacing:0.82px">Organisation</div>
<div class="t" style="left:770.5px;top:283.1px;font-size:18px;line-height:22px;color:#1a1a1a;letter-spacing:0.1px">Fêtes 2023</div>
<svg class="s" style="left:670px;top:245px" width="80" height="70" viewBox="0 0 80 70">
<ellipse cx="37" cy="57" rx="13" ry="1.8" fill="#86c95a"/>
<path d="M34 57 L35 45 L29 39 L30.5 38 L35.5 42.5 L36 33 L40 33 L40 41 L46 36 L47 37.5 L40.5 44 L41.5 57 Z" fill="#707070"/>
<path d="M14 27 Q15 19 22 17 Q28 15 31 19 L31 28 L22 30 Z" fill="#7cbc2c"/>
<path d="M19 21 L26 18 M16 26 L30 25 M23 19 L27 29" stroke="#c7e89a" stroke-width="0.6"/>
<path d="M28 17 Q33 13 41 15 Q47 17 48 22 L46 32 L43 39 Q38 40 35 37 L33 30 L28 27 Z" fill="#20a3b1"/>
<path d="M33 16 L36 24 L47 22 M36 24 L33 30 M36 24 L44 31" stroke="#b8e6ea" stroke-width="0.6" fill="none"/>
<path d="M13.5 30 Q18 28 25 28.5 L31 29 L33 35 L32 42 L28 47 L27 49 L25 43 L18 41 Q13 37 13.5 30 Z" fill="#f4b52a"/>
<path d="M16 31 L27 43 M22 29 L25 40 M31 30 L25 40" stroke="#fbe3a0" stroke-width="0.6"/>
<path d="M43.5 24 L51 21.5 L55 25 L55.5 31 L52 35 L46.5 36 L43 31 Z" fill="#d6237e"/>
<path d="M46 24 L50 30 L54 25 M50 30 L47 35" stroke="#f4a8cf" stroke-width="0.6" fill="none"/>
<ellipse cx="52.5" cy="18" rx="1.4" ry="2.4" transform="rotate(25 52.5 18)" fill="#e88ec0"/>
<ellipse cx="58" cy="18.5" rx="2.2" ry="1.2" fill="#e88ec0"/>
<ellipse cx="61" cy="13" rx="1.2" ry="2.2" transform="rotate(30 61 13)" fill="#e88ec0"/>
<ellipse cx="66" cy="14.3" rx="1" ry="1.6" fill="#e88ec0"/>
<ellipse cx="59" cy="26.5" rx="1.3" ry="2.3" transform="rotate(-30 59 26.5)" fill="#e88ec0"/>
</svg>
<!-- Noel selection -->
<svg class="s" style="left:582px;top:354px" width="132" height="164" viewBox="582 354 132 164">
<path d="M636.3 367.5 L645.2 358.3 Q647.6 356.4 650 358.3 L658.9 367.5 Z" fill="#3f97f6"/>
<path d="M596.5 424.7 L586.6 433.8 Q585.2 435.6 586.6 437.4 L596.5 446.6 Z" fill="#3f97f6"/>
<path d="M700 424.7 L708.8 433.8 Q710.2 435.6 708.8 437.4 L700 446.6 Z" fill="#3f97f6"/>
<rect x="596.3" y="366.9" width="103.7" height="138.4" rx="5.5" fill="#fff" stroke="#3f97f6" stroke-width="2"/>
<rect x="599" y="367.8" width="98" height="2" fill="#3f97f6"/>
<path d="M599 370.6 H697.5 M597.8 372 V500 M600 503.7 H698" stroke="#8ec6cc" stroke-width="1.4"/>
<path d="M647.6 360.1 V365.1 M645.1 362.6 H650.1" stroke="#fff" stroke-width="1.6"/>
<path d="M591.2 433.1 V438.1 M588.7 435.6 H593.7" stroke="#fff" stroke-width="1.6"/>
<path d="M704.3 433.1 V438.1 M701.8 435.6 H706.8" stroke="#fff" stroke-width="1.6"/>
<path d="M638.2 506.3 H657.4 V513 Q657.4 514.6 655.8 514.6 H639.8 Q638.2 514.6 638.2 513 Z" fill="#d8101c"/>
<path d="M647.8 507.6 V513.2 M645 510.4 H650.6" stroke="#fff" stroke-width="1.6"/>
</svg>
<div class="a" style="left:597.8px;top:371.2px;width:100.6px;height:131.9px;border:2.1px solid #5d9e62;border-radius:7px"></div>
<svg class="s" style="left:605px;top:375px" width="85" height="85" viewBox="0 0 85 85">
<path d="M42.2 11.4 Q42.6 11 43 11.6 L66.2 45 Q66.8 46.2 65.5 46.2 H19 Q17.7 46.2 18.3 45 Z" fill="#72c47a"/>
<path d="M26.3 46.2 H58.1 L72.6 67.3 Q73.2 68.5 71.8 68.5 H12.8 Q11.4 68.5 12 67.3 Z" fill="#52a655"/>
<rect x="39.2" y="68.5" width="6.5" height="9.9" rx="1" fill="#a57c52"/>
<circle cx="45.7" cy="28.8" r="3.3" fill="#fff"/><circle cx="34.3" cy="38.7" r="1.8" fill="#fff"/>
<circle cx="35.7" cy="58.1" r="3.3" fill="#fff"/><circle cx="50.4" cy="53.1" r="1.8" fill="#fff"/>
</svg>
<div class="t" style="left:627.5px;top:470px;font-size:18px;line-height:22px;color:#1a1a1a;letter-spacing:0.4px">Noël</div>
<!-- Nouvel An -->
<div class="a" style="left:836.4px;top:370.8px;width:115px;height:132.2px;border:2.1px solid #dccd80;border-radius:7px;background:#fff"></div>
<svg class="s" style="left:855px;top:375px" width="75" height="90" viewBox="0 0 75 90">
<defs>
<linearGradient id="bg1" x1="0" x2="1" y1="0" y2="0"><stop offset="0" stop-color="#5f9a25"/><stop offset="0.35" stop-color="#8cc04a"/><stop offset="0.7" stop-color="#4f8a1e"/><stop offset="1" stop-color="#2f5e10"/></linearGradient>
<linearGradient id="gd1" x1="0" x2="1" y1="0" y2="0"><stop offset="0" stop-color="#b89a30"/><stop offset="0.5" stop-color="#e4cf6a"/><stop offset="1" stop-color="#9a7e20"/></linearGradient>
</defs>
<path d="M12.1 17.4 H35.2 L30 50 Q27.5 61 24.2 61 Q20.9 61 18.4 50 Z" fill="#f6f6f0" stroke="#c0c0b8" stroke-width="0.8"/>
<path d="M14.3 26.8 H33 L29 50 Q27 59.5 24.2 59.5 Q21.4 59.5 19.4 50 Z" fill="#f2d650"/>
<path d="M16 30 L20.5 52" stroke="#fbf0a8" stroke-width="1.5"/>
<path d="M13.3 21.6 H34.1 L33.3 26.8 H14.2 Z" fill="#e6dcd2"/>
<rect x="22.6" y="60" width="3.4" height="17.5" fill="#f0eac0" stroke="#d8d0a0" stroke-width="0.5"/>
<path d="M10.5 80.5 Q11 77 23.4 76.8 Q35.8 77 36.3 80.5 Q35.8 81.6 23.4 81.6 Q11 81.6 10.5 80.5 Z" fill="#ece6c2" stroke="#b0ac90" stroke-width="0.6"/>
<path d="M46 12 H56 V31 Q63.6 36 63.6 46 V79.5 Q63.6 81 62 81 H40 Q38.4 81 38.4 79.5 V46 Q38.4 36 46 31 Z" fill="url(#bg1)"/>
<path d="M45.2 9 Q45.2 7.8 46.4 7.8 H55.6 Q56.8 7.8 56.8 9 V15.8 H45.2 Z" fill="url(#gd1)"/>
<path d="M46 15.8 H56 V31 Q59.5 33.5 61 38 Q51 41 41 38 Q42.5 33.5 46 31 Z" fill="url(#gd1)"/>
<path d="M40.5 42 Q42 40 43.5 40.5 V80.5 H40.5 Z" fill="#c4b040" opacity="0.75"/>
</svg>
<div class="t" style="left:848px;top:470px;font-size:18px;line-height:22px;color:#1a1a1a;letter-spacing:0.8px">Nouvel An</div>
<!-- Organiser le repas -->
<div class="a" style="left:622.3px;top:544.3px;width:184.4px;height:119.5px;border:2.3px solid #5d9e62;border-radius:8px;background:#fff"></div>
<svg class="s" style="left:670px;top:555px" width="90" height="65" viewBox="0 0 90 65">
<defs>
<linearGradient id="tb" x1="0" x2="1" y1="0" y2="0"><stop offset="0" stop-color="#f2efe2"/><stop offset="0.45" stop-color="#e2dabb"/><stop offset="0.8" stop-color="#d2c8a2"/><stop offset="1" stop-color="#e8e2c8"/></linearGradient>
</defs>
<path d="M9.3 24 Q9.2 34 9.8 51 Q12 58 45 58.3 Q78 58 80.2 51 Q80.8 34 80.7 24 Z" fill="#b8b8b0"/>
<path d="M9.5 24 Q9.5 33 10 50 Q12 56.5 45 57 Q78 56.5 80 50 Q80.5 33 80.5 24 Z" fill="url(#tb)"/>
<path d="M19 31 V53 M34 32 V56 M56 32 V56 M70 31 V52" stroke="#f6f3e6" stroke-width="1.2" opacity="0.55"/>
<ellipse cx="45" cy="24" rx="35.2" ry="7.2" fill="#f2eee0"/>
<ellipse cx="26.5" cy="22.5" rx="7" ry="2.6" fill="#fdfdfb"/><ellipse cx="62.5" cy="22.5" rx="7" ry="2.6" fill="#fdfdfb"/><ellipse cx="48" cy="27.8" rx="7.5" ry="2.6" fill="#fdfdfb"/>
<path d="M15.5 21 L22.5 24.8 M36.5 22 L43.5 27.5 M55.5 26 L60.5 27.8 M71.5 22 L76.5 20.5" stroke="#c4606a" stroke-width="1.1"/>
<g stroke="#d0d0d0" stroke-width="0.6">
<path d="M31.8 5.8 H36.6 L35.8 12.2 Q34.2 14 32.6 12.2 Z" fill="#f4f0f0"/>
<path d="M41.3 10.3 H46.1 L45.3 16.7 Q43.7 18.5 42.1 16.7 Z" fill="#f4f0f0"/>
<path d="M51.3 6.8 H56.1 L55.3 13.2 Q53.7 15 52.1 13.2 Z" fill="#f4f0f0"/>
</g>
<path d="M32.3 8 H36.1 L35.6 12 Q34.2 13.4 32.8 12 Z M41.8 12.5 H45.6 L45.1 16.5 Q43.7 17.9 42.3 16.5 Z M51.8 9 H55.6 L55.1 13 Q53.7 14.4 52.3 13 Z" fill="#a8405a"/>
<path d="M34.2 13.5 V21 M43.7 18 V25 M53.7 14.5 V22" stroke="#c8c8c8" stroke-width="0.8"/>
</svg>
<div class="t" style="left:635px;top:634.6px;font-size:18px;line-height:22px;color:#1a1a1a;letter-spacing:0.45px">Organiser le repas</div>
<!-- Acheter des cadeaux -->
<div class="a" style="left:622.4px;top:672.4px;width:205.4px;height:118.7px;border:2.3px solid #5d9e62;border-radius:8px;background:#fff"></div>
<svg class="s" style="left:680px;top:675px" width="90" height="85" viewBox="0 0 90 85">
<path d="M48 17 Q40 5.5 33 5.5 Q27.5 5.5 28 11 Q28.5 16 34 17.7 M48 17 Q56 5.5 63 5.5 Q68.5 5.5 68 11 Q67.5 16 62 17.7" fill="none" stroke="#e0be3a" stroke-width="2.3"/>
<rect x="20.6" y="29.5" width="54.8" height="29.9" rx="1.5" fill="#c94a4a"/>
<rect x="14" y="17.7" width="68" height="11.8" rx="2" fill="#e86c5e"/>
<rect x="40.2" y="17.7" width="15.9" height="11.8" fill="#f0d050"/>
<rect x="40.2" y="29.5" width="15.9" height="29.9" fill="#d8b840"/>
<path d="M7.5 43 H40 Q44.5 43 44.5 47.3 Q44.5 51.5 40 51.5 H33 Q30 51.5 30 55.5 Q30 59.4 33 59.4 H76.5 L78.7 63.5 L49 79 L7.5 63 Z" fill="#efd9c4"/>
</svg>
<div class="t" style="left:635px;top:761.9px;font-size:18px;line-height:22px;color:#1a1a1a;letter-spacing:0.45px">Acheter des cadeaux</div>


</body></html>
